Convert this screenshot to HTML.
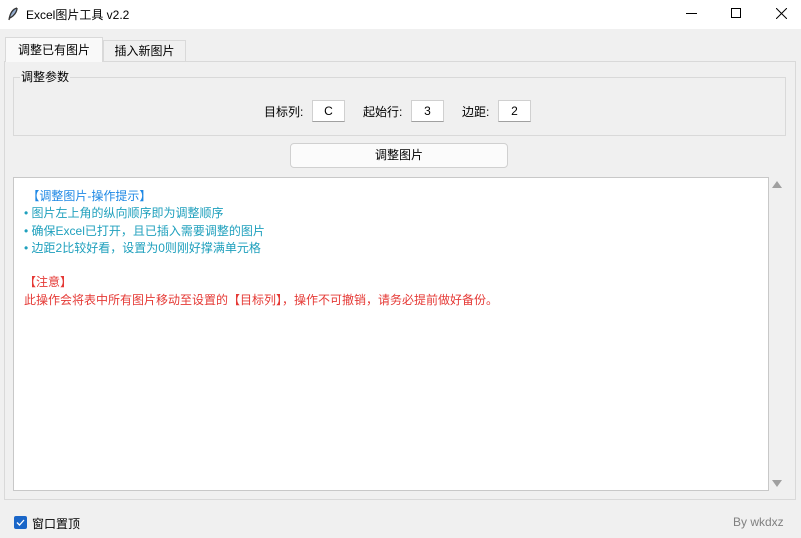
<!DOCTYPE html>
<html><head><meta charset="utf-8"><style>
*{margin:0;padding:0;box-sizing:border-box}
body{width:801px;height:538px;background:#f0f0f0;font-family:"Liberation Sans","Noto Sans CJK SC",sans-serif;font-size:12px;color:#000;position:relative;overflow:hidden}
.a{position:absolute}
.title{left:0;top:0;width:801px;height:29px;background:#fff}
.entry{background:#fff;border:1px solid #d0d0d0;border-bottom-color:#a0a0a0;height:22px;width:33px;text-align:center;line-height:21px;font-size:12px}
</style></head><body>
<div class="a title">
 <svg class="a" style="left:7px;top:7px" width="12" height="15" viewBox="0 0 12 15"><path d="M10 1 C6 2 3 6 2 13 M10 1 C10 5 7 9 3 11" stroke="#333" stroke-width="1.3" fill="#8aa4c8"/></svg>
 <div class="a" style="left:26px;top:6px;font-size:12px">Excel图片工具 v2.2</div>
 <div class="a" style="left:686px;top:13px;width:11px;height:1px;background:#000"></div>
 <div class="a" style="left:731px;top:8px;width:10px;height:10px;border:1px solid #000"></div>
 <svg class="a" style="left:776px;top:8px" width="11" height="11"><path d="M0 0L11 11M11 0L0 11" stroke="#000" stroke-width="1"/></svg>
</div>
<div class="a" style="left:4px;top:61px;width:792px;height:439px;border:1px solid #d9d9d9;background:#f0f0f0"></div>
<div class="a" style="left:5px;top:37px;width:98px;height:25px;background:#f9f9f9;border:1px solid #d9d9d9;border-bottom:none;text-align:center;line-height:24px;font-size:12px">调整已有图片</div>
<div class="a" style="left:103px;top:40px;width:83px;height:21px;background:#f0f0f0;border:1px solid #d9d9d9;border-bottom:none;text-align:center;line-height:21px;font-size:12px">插入新图片</div>
<div class="a" style="left:13px;top:77px;width:773px;height:59px;border:1px solid #d9d9d9"></div>
<div class="a" style="left:20px;top:68px;background:#f0f0f0;padding:0 1px;font-size:12px">调整参数</div>
<div class="a" style="left:264px;top:103px">目标列:</div>
<div class="a entry" style="left:312px;top:100px">C</div>
<div class="a" style="left:363px;top:103px">起始行:</div>
<div class="a entry" style="left:411px;top:100px">3</div>
<div class="a" style="left:462px;top:103px">边距:</div>
<div class="a entry" style="left:498px;top:100px">2</div>
<div class="a" style="left:290px;top:143px;width:218px;height:25px;background:#fbfbfb;border:1px solid #d0d0d0;border-radius:4px;text-align:center;line-height:23px">调整图片</div>
<div class="a" style="left:13px;top:177px;width:756px;height:314px;background:#fff;border:1px solid #c8c8c8;font-size:12px;line-height:17.3px;padding:10px 0 0 10px">
 <div style="color:#1e88e5">&nbsp;【调整图片-操作提示】</div>
 <div style="color:#1fa0bd">• 图片左上角的纵向顺序即为调整顺序</div>
 <div style="color:#1fa0bd">• 确保Excel已打开，且已插入需要调整的图片</div>
 <div style="color:#1fa0bd">• 边距2比较好看，设置为0则刚好撑满单元格</div>
 <div>&nbsp;</div>
 <div style="color:#e53935">【注意】</div>
 <div style="color:#e53935">此操作会将表中所有图片移动至设置的【目标列】，操作不可撤销，请务必提前做好备份。</div>
</div>
<svg class="a" style="left:772px;top:181px" width="10" height="7"><path d="M5 0L10 7H0Z" fill="#a0a0a0"/></svg>
<svg class="a" style="left:772px;top:480px" width="10" height="7"><path d="M0 0H10L5 7Z" fill="#a0a0a0"/></svg>
<div class="a" style="left:14px;top:516px;width:13px;height:13px;background:#1a66c8;border-radius:2px"><svg width="13" height="13"><path d="M3 6.5L5.5 9L10 4" stroke="#fff" stroke-width="1.3" fill="none"/></svg></div>
<div class="a" style="left:32px;top:515px">窗口置顶</div>
<div class="a" style="left:733px;top:515px;color:#808080">By wkdxz</div>
</body></html>
